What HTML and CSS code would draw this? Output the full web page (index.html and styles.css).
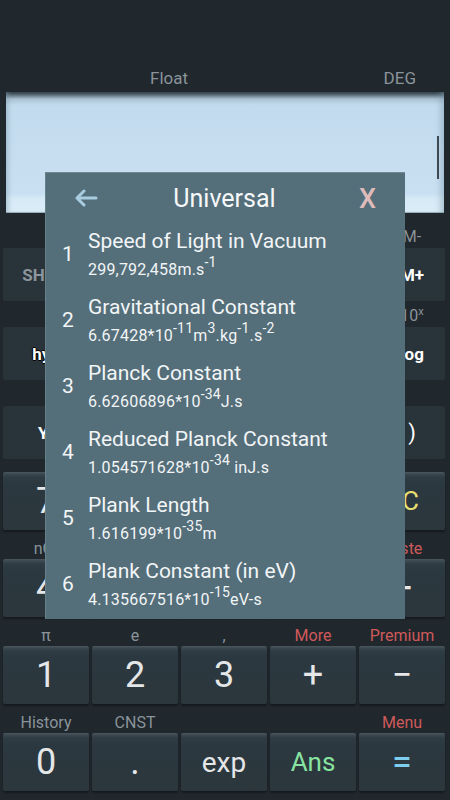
FILE: index.html
```html
<!DOCTYPE html>
<html>
<head>
<meta charset="utf-8">
<link rel="stylesheet" href="styles.css">
</head>
<body>
<div class="status">
  <span class="mode">Float</span>
  <span class="mode deg">DEG</span>
</div>
<div class="display">
  <div class="scroll"></div>
</div>
<div class="pad">
  <div class="lrow l1"><span></span><span></span><span></span><span></span><span class="r">M-</span></div>
  <div class="krow">
    <div class="fk gray">SHIFT</div><div class="fk">DRG</div><div class="fk">RCL</div><div class="fk">STO</div><div class="fk r">M+</div>
  </div>
  <div class="lrow l2"><span></span><span></span><span></span><span></span><span class="r">10<sup>x</sup></span></div>
  <div class="krow">
    <div class="fk outline">hyp</div><div class="fk">sin</div><div class="fk">cos</div><div class="fk">tan</div><div class="fk r">log</div>
  </div>
  <div class="lrow l2"><span></span><span></span><span></span><span></span><span></span></div>
  <div class="krow">
    <div class="fk">Y<sup>x</sup></div><div class="fk">√</div><div class="fk">x²</div><div class="fk thin">(</div><div class="fk thin r">)</div>
  </div>
  <div class="krow num first">
    <div class="nk">7</div><div class="nk">8</div><div class="nk">9</div><div class="nk sm">DEL</div><div class="nk sm yellow">AC</div>
  </div>
  <div class="lrow l3"><span>nCr</span><span></span><span></span><span></span><span class="red">Paste</span></div>
  <div class="krow num">
    <div class="nk">4</div><div class="nk">5</div><div class="nk">6</div><div class="nk">×</div><div class="nk">÷</div>
  </div>
  <div class="lrow l3"><span>π</span><span>e</span><span>,</span><span class="red">More</span><span class="red">Premium</span></div>
  <div class="krow num">
    <div class="nk">1</div><div class="nk">2</div><div class="nk">3</div><div class="nk">+</div><div class="nk">−</div>
  </div>
  <div class="lrow l3"><span>History</span><span>CNST</span><span></span><span></span><span class="red">Menu</span></div>
  <div class="krow num">
    <div class="nk">0</div><div class="nk">.</div><div class="nk word">exp</div><div class="nk word ans">Ans</div><div class="nk blue">=</div>
  </div>
</div>

<div class="dialog">
  <div class="dhead">
    <svg class="back" width="24" height="18" viewBox="0 0 24 18"><path d="M22 9H3M10 2L3 9l7 7" fill="none" stroke="#a9cde0" stroke-width="3" stroke-linecap="round" stroke-linejoin="round"/></svg>
    <span class="title">Universal</span>
    <span class="close">X</span>
  </div>
  <div class="list">
    <div class="item"><span class="no">1</span><div class="txt"><div class="name">Speed of Light in Vacuum</div><div class="val">299,792,458m.s<sup>-1</sup></div></div></div>
    <div class="item"><span class="no">2</span><div class="txt"><div class="name">Gravitational Constant</div><div class="val">6.67428*10<sup>-11</sup>m<sup>3</sup>.kg<sup>-1</sup>.s<sup>-2</sup></div></div></div>
    <div class="item"><span class="no">3</span><div class="txt"><div class="name">Planck Constant</div><div class="val">6.62606896*10<sup>-34</sup>J.s</div></div></div>
    <div class="item"><span class="no">4</span><div class="txt"><div class="name">Reduced Planck Constant</div><div class="val">1.054571628*10<sup>-34</sup> inJ.s</div></div></div>
    <div class="item"><span class="no">5</span><div class="txt"><div class="name">Plank Length</div><div class="val">1.616199*10<sup>-35</sup>m</div></div></div>
    <div class="item"><span class="no">6</span><div class="txt"><div class="name">Plank Constant (in eV)</div><div class="val">4.135667516*10<sup>-15</sup>eV-s</div></div></div>
  </div>
</div>
</body>
</html>
```
FILE: styles.css
```css
* { box-sizing: border-box; }
html, body { margin: 0; padding: 0; }
body {
  width: 450px;
  height: 800px;
  overflow: hidden;
  background: #20272d;
  font-family: Roboto, "Noto Sans", sans-serif;
  position: relative;
}
.status {
  height: 92px;
  display: flex;
  align-items: flex-end;
  padding: 0 0 3px 150px;
}
.mode { font-size: 17px; line-height: 22px; color: #8a949a; }
.deg { margin-left: auto; margin-right: 34px; }

.display {
  margin: 0 6px;
  height: 121px;
  position: relative;
  background: linear-gradient(#2a343c 0, #5d6f7b 3px, #a9c1d2 7px, #c3dbee 13px, #c7def1 60%, #c9e0f2 84%, #d6eaf6 88%, #dcedf7 100%);
  box-shadow: inset 5px 0 5px -3px rgba(120,150,170,0.5), inset -6px 0 6px -3px rgba(120,150,170,0.5), inset 0 -1px 0 #9fb4c2;
}
.scroll {
  position: absolute;
  right: 5px;
  top: 44px;
  width: 2px;
  height: 43px;
  background: #3e4a53;
}

.pad { padding: 0 5px 0 3px; }
.lrow, .krow {
  display: grid;
  grid-template-columns: repeat(5, 1fr);
  column-gap: 3px;
}
.lrow { align-items: end; color: #8a949a; text-align: center; }
.lrow span { display: block; white-space: nowrap; }
.lrow sup { font-size: 11px; }
.l1 { height: 35px; font-size: 16px; line-height: 22px; }
.l2 { height: 26px; font-size: 16px; line-height: 22px; }
.l3 { height: 29px; font-size: 16px; line-height: 20px; }
.red { color: #cf5a5a; }
.r { padding-left: 20px; }

.fk {
  height: 53px;
  background: #29333a;
  border-radius: 2px;
  display: flex;
  align-items: center;
  justify-content: center;
  color: #ffffff;
  font-size: 17px;
  font-weight: 700;
}
.fk sup { font-size: 11px; }
.fk.gray { color: #8c969c; }
.fk.outline { text-shadow: -1px 0 #000, 1px 0 #000, 0 1px #000, 0 -1px #000; }
.fk.thin { font-weight: 400; font-size: 22px; }

.num.first { margin-top: 13px; }
.nk {
  height: 58px;
  border-radius: 2px;
  background: linear-gradient(#4c585f 0, #3c4850 2px, #303c43 5px, #2c383f 12px, #2b363d 100%);
  box-shadow: 0 2px 2px rgba(0,0,0,0.35);
  display: flex;
  align-items: center;
  justify-content: center;
  color: #e4e6e7;
  font-size: 36px;
  font-weight: 400;
}
.nk.sm { font-size: 26px; }
.nk.word { font-size: 28px; }
.nk.ans { font-size: 26px; color: #88e3a1; }
.yellow { color: #e8df72; }
.blue { color: #7dcdee; }

.dialog {
  position: absolute;
  left: 45px;
  top: 172px;
  width: 360px;
  height: 447px;
  background: #546e7a;
  border-top: 1px solid #6f8995;
  border-left: 1px solid #64808b;
  overflow: hidden;
}
.dhead {
  height: 51px;
  display: grid;
  grid-template-columns: 1fr auto 1fr;
  align-items: center;
  padding: 0 29px 0 28px;
}
.back { display: block; margin-top: -2px; }
.title {
  color: #f6f8f9;
  font-size: 25px;
  margin-left: -1px;
}
.close {
  justify-self: end;
  color: #dfbaba;
  font-size: 27px;
  font-weight: 500;
}
.item {
  height: 66px;
  display: flex;
  align-items: center;
  padding-left: 16px;
}
.no {
  width: 26px;
  color: #f2f5f6;
  font-size: 21px;
  margin-bottom: 6px;
}
.txt { color: #f2f5f6; }
.name { font-size: 21px; line-height: 26px; }
.val { font-size: 16px; line-height: 32px; letter-spacing: 0.2px; }
.val sup { font-size: 14px; line-height: 0; vertical-align: 8px; }
```
